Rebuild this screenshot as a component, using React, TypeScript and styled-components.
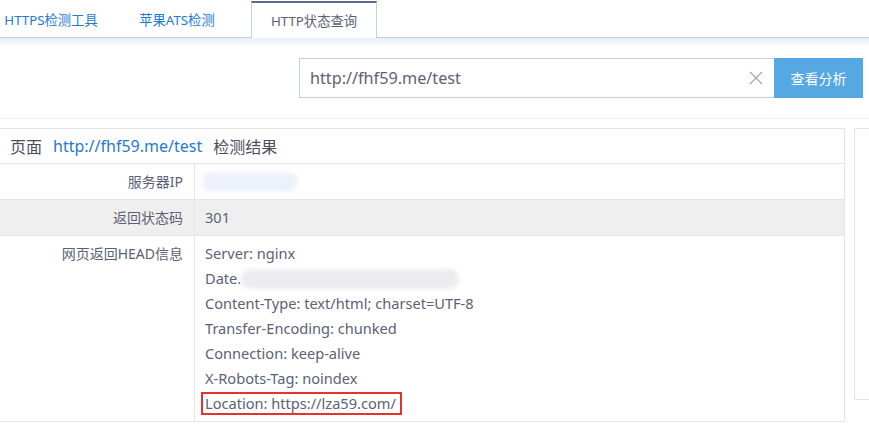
import React from 'react';
import styled, {createGlobalStyle} from 'styled-components';

const GlobalStyle = createGlobalStyle`
  html, body {
    margin: 0;
    padding: 0;
    background: #fff;
    overflow: hidden;
  }
  body {
    font-family: "Noto Sans", "Noto Sans CJK SC", sans-serif;
    color: #5b6275;
  }
`;

const Page = styled.div`
  width: 869px;
  height: 427px;
  overflow: hidden;
`;

const TabBar = styled.div`
  display: flex;
  height: 36px;
  border-bottom: 1px solid #c5cde0;
  padding-top: 1px;
  margin-left: -12px;
`;

const Tab = styled.div<{$active?: boolean}>`
  width: 126px;
  box-sizing: border-box;
  display: flex;
  align-items: center;
  justify-content: center;
  font-size: 13.3px;
  color: ${p => (p.$active ? '#5b6275' : '#1f7bd1')};
  background: #fff;
  ${p =>
    p.$active &&
    `
    margin-left: 11px;
    border-top: 2px solid #5b6b8a;
    border-left: 1px solid #c5cde0;
    border-right: 1px solid #c5cde0;
    margin-bottom: -1px;
    height: 37px;
  `}
`;

const Shade = styled.div`
  height: 10px;
  background: linear-gradient(#e8eef8, #ffffff);
`;

const SearchSection = styled.div`
  display: flex;
  justify-content: flex-end;
  padding: 10px 6px 20px 0;
  border-bottom: 1px solid #eeeeee;
`;

const InputBox = styled.div`
  width: 475px;
  height: 40px;
  box-sizing: border-box;
  border: 1px solid #c5cde0;
  border-right: none;
  display: flex;
  align-items: center;
  padding: 0 10px 0 10px;
`;

const InputText = styled.div`
  flex: 1;
  font-size: 16.2px;
  color: #5b6275;
`;

const ClearIcon = styled.svg`
  width: 14px;
  height: 14px;
  margin-right: 1px;
`;

const SearchButton = styled.div`
  width: 89px;
  height: 40px;
  background: #56a8e3;
  color: #fff;
  font-size: 14px;
  display: flex;
  align-items: center;
  justify-content: center;
`;

const Content = styled.div`
  display: flex;
  align-items: flex-start;
  margin-top: 9px;
  margin-left: -1px;
`;

const Panel = styled.div`
  width: 846px;
  flex-shrink: 0;
  box-sizing: border-box;
  border: 1px solid #e5e5e5;
`;

const SidePanel = styled.div`
  margin-left: 9px;
  width: 40px;
  height: 272px;
  flex-shrink: 0;
  box-sizing: border-box;
  border: 1px solid #e5e5e5;
`;

const PanelHeader = styled.div`
  height: 34px;
  display: flex;
  align-items: center;
  padding-left: 10px;
  font-size: 16px;
  color: #4a4f5c;
  border-bottom: 1px solid #e5e5e5;
  gap: 11px;
`;

const HeaderLink = styled.span`
  color: #1f7bd1;
`;

const Row = styled.div<{$shaded?: boolean}>`
  display: grid;
  grid-template-columns: 195px 1fr;
  background: ${p => (p.$shaded ? '#efefef' : '#fff')};
  border-bottom: 1px solid #e5e5e5;
  &:last-child {
    border-bottom: none;
  }
`;

const Label = styled.div`
  text-align: right;
  padding: 5px 11px 5px 0;
  border-right: 1px solid #e5e5e5;
  font-size: 14px;
  line-height: 25px;
`;

const Value = styled.div`
  padding: 5px 0 5px 10px;
  font-size: 14.6px;
  line-height: 25px;
`;

const Line = styled.div`
  display: flex;
  align-items: center;
  height: 25px;
`;

const Blur = styled.span<{$w: number; $color: string}>`
  display: inline-block;
  width: ${p => p.$w}px;
  height: 20px;
  border-radius: 10px;
  background: ${p => p.$color};
  filter: blur(2px);
`;

const Highlight = styled.span`
  display: inline-block;
  margin-left: -4px;
  padding: 0 4px 0 2px;
  border: 2px solid #e8312f;
  line-height: 19px;
`;

const headers = [
  'Content-Type: text/html; charset=UTF-8',
  'Transfer-Encoding: chunked',
  'Connection: keep-alive',
  'X-Robots-Tag: noindex',
];

export default function App() {
  return (
    <Page>
      <GlobalStyle />
      <TabBar>
        <Tab>HTTPS检测工具</Tab>
        <Tab>苹果ATS检测</Tab>
        <Tab $active>HTTP状态查询</Tab>
      </TabBar>
      <Shade />
      <SearchSection>
        <InputBox>
          <InputText>http://fhf59.me/test</InputText>
          <ClearIcon viewBox="0 0 14 14">
            <path d="M1 1L13 13M13 1L1 13" stroke="#a8a8a8" strokeWidth="1.2" fill="none" />
          </ClearIcon>
        </InputBox>
        <SearchButton>查看分析</SearchButton>
      </SearchSection>
      <Content>
        <Panel>
          <PanelHeader>
            <span>页面</span>
            <HeaderLink>http://fhf59.me/test</HeaderLink>
            <span>检测结果</span>
          </PanelHeader>
          <Row>
            <Label>服务器IP</Label>
            <Value>
              <Line>
                <Blur $w={96} $color="#edf1f9" style={{marginLeft: -3}} />
              </Line>
            </Value>
          </Row>
          <Row $shaded>
            <Label>返回状态码</Label>
            <Value>301</Value>
          </Row>
          <Row>
            <Label>网页返回HEAD信息</Label>
            <Value>
              <Line>Server: nginx</Line>
              <Line>
                Date.
                <Blur $w={218} $color="#ececef" />
              </Line>
              {headers.map(h => (
                <Line key={h}>{h}</Line>
              ))}
              <Line>
                <Highlight>Location: https://lza59.com/</Highlight>
              </Line>
            </Value>
          </Row>
        </Panel>
        <SidePanel />
      </Content>
    </Page>
  );
}
